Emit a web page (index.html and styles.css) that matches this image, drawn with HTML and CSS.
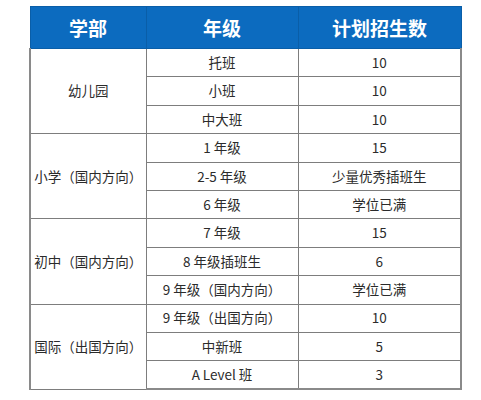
FILE: index.html
```html
<!DOCTYPE html>
<html lang="zh">
<head>
<meta charset="utf-8">
<link rel="stylesheet" href="styles.css">
</head>
<body>
<div class="page">
  <table class="plan">
    <colgroup>
      <col class="c1"><col class="c2"><col class="c3">
    </colgroup>
    <thead>
      <tr><th>学部</th><th>年级</th><th>计划招生数</th></tr>
    </thead>
    <tbody>
      <tr><td class="dept" rowspan="3">幼儿园</td><td>托班</td><td>10</td></tr>
      <tr><td>小班</td><td>10</td></tr>
      <tr><td>中大班</td><td>10</td></tr>
      <tr><td class="dept" rowspan="3">小学（国内方向）</td><td>1 年级</td><td>15</td></tr>
      <tr><td>2-5 年级</td><td>少量优秀插班生</td></tr>
      <tr><td>6 年级</td><td>学位已满</td></tr>
      <tr><td class="dept" rowspan="3">初中（国内方向）</td><td>7 年级</td><td>15</td></tr>
      <tr><td>8 年级插班生</td><td>6</td></tr>
      <tr><td>9 年级（国内方向）</td><td>学位已满</td></tr>
      <tr><td class="dept" rowspan="3">国际（出国方向）</td><td>9 年级（出国方向）</td><td>10</td></tr>
      <tr><td>中新班</td><td>5</td></tr>
      <tr><td>A Level 班</td><td>3</td></tr>
    </tbody>
  </table>
</div>
</body>
</html>
```
FILE: styles.css
```css
html, body {
  margin: 0;
  padding: 0;
  background: #ffffff;
}
.page {
  padding: 6px 0 0 29px;
  font-family: "Noto Sans CJK SC", "Noto Sans", sans-serif;
}
.plan {
  border-collapse: collapse;
  table-layout: fixed;
  width: 431px;
  color: #2b2b2b;
}
.c1 { width: 116px; }
.c2 { width: 152px; }
.c3 { width: 163px; }
.plan th {
  background: #0c6bbf;
  color: #ffffff;
  font-size: 19px;
  font-weight: 700;
  height: 41px;
  padding: 0;
  border: 1px solid #0a5ea8;
  border-left-color: #2a3f55;
  text-align: center;
  vertical-align: middle;
  line-height: 1;
}
.plan th:first-child { border-left-color: #0a5ea8; }
.plan td {
  font-size: 13.5px;
  height: 28.4px;
  padding: 0;
  border: 1px solid #7d7d7d;
  text-align: center;
  vertical-align: middle;
  line-height: 1;
  box-sizing: border-box;
}
.plan tbody tr:last-child td { border-bottom: 2px solid #8a8a8a; }
.plan td.dept { border-left: 2px solid #8a8a8a; }
.plan tr td:last-child { border-right: 2px solid #8a8a8a; }
```
